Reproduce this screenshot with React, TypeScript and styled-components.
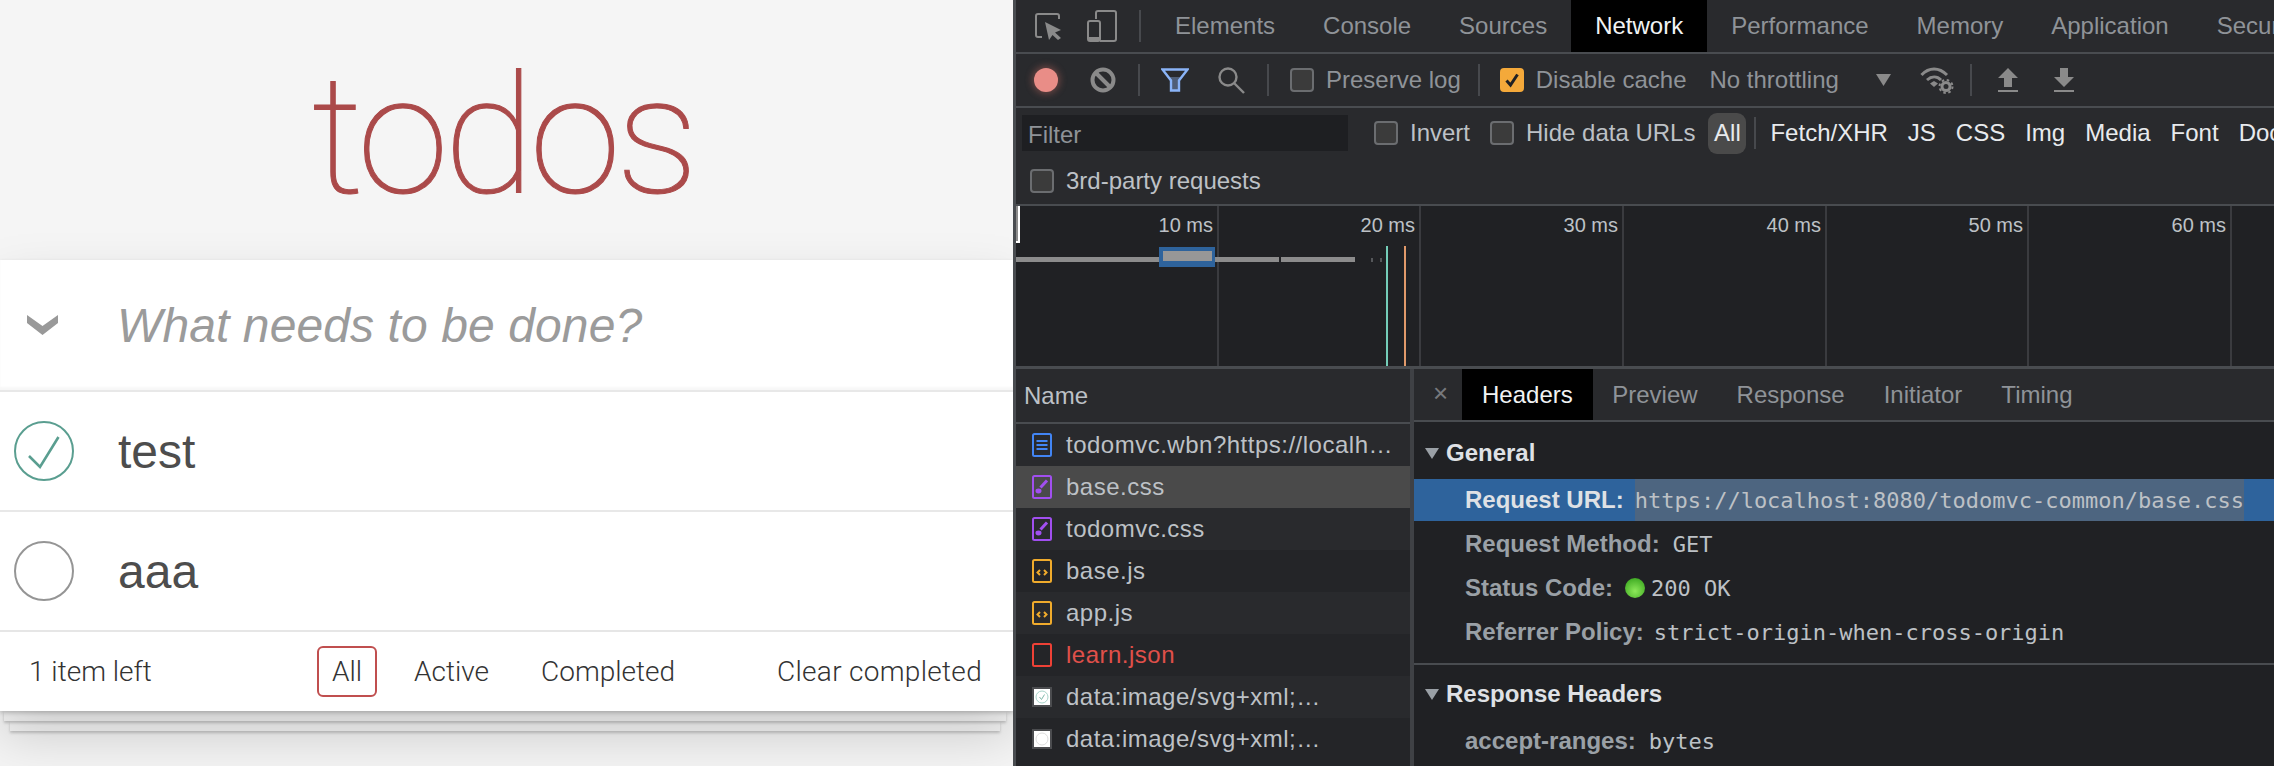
import styled, { createGlobalStyle } from "styled-components";

const GlobalStyle = createGlobalStyle`
  html, body {
    margin: 0;
    height: 100%;
    overflow: hidden;
    background: #f5f5f5;
  }
  * {
    box-sizing: border-box;
  }
`;

const LINE = "#494c50";

const Page = styled.div`
  display: flex;
  width: 2274px;
  height: 766px;
  overflow: hidden;
`;

/* ---------- todomvc side ---------- */

const TodoPane = styled.div`
  width: 1013px;
  flex: none;
  height: 100%;
  background: #f5f5f5;
  overflow: hidden;
  font-family: "Liberation Sans", Arial, sans-serif;
  color: #4d4d4d;
`;

const Title = styled.h1`
  margin: 0;
  height: 260px;
  padding: 53px 8px 0 0;
  text-align: center;
  font-family: Roboto, "Liberation Sans", sans-serif;
  font-size: 166px;
  line-height: 166px;
  font-weight: 100;
  letter-spacing: -5px;
  color: #ab4a4a;
  -webkit-text-stroke: 1px #ab4a4a;
`;

const TodoCard = styled.section`
  position: relative;
  z-index: 3;
  background: #fff;
  box-shadow: 0 2px 4px 0 rgba(0, 0, 0, 0.2), 0 25px 50px 0 rgba(0, 0, 0, 0.17);
`;

const NewTodo = styled.div`
  display: flex;
  align-items: center;
  height: 130px;
  padding-left: 27px;
  box-shadow: inset 0 -3px 2px rgba(0, 0, 0, 0.03);
`;

const Placeholder = styled.span`
  margin-left: 58px;
  font-size: 48px;
  font-style: italic;
  letter-spacing: 0.1px;
  color: #9b9b9b;
`;

const TodoRow = styled.div`
  display: flex;
  align-items: center;
  height: 120px;
  padding-left: 14px;
  border-top: 2px solid #e8e8e8;
`;

const TodoText = styled.span`
  margin-left: 44px;
  font-size: 48px;
  color: #4d4d4d;
`;

const Footer = styled.div`
  display: flex;
  align-items: center;
  height: 81px;
  padding: 0 31px 1px 29px;
  border-top: 2px solid #e6e6e6;
  font-family: Roboto, "Liberation Sans", sans-serif;
  font-size: 28px;
  font-weight: 300;
  color: #333;
`;

const Count = styled.span`
  width: 288px;
`;

const Filters = styled.div`
  display: flex;
  gap: 22px;
`;

const FilterLink = styled.span<{ $active?: boolean }>`
  display: flex;
  align-items: center;
  height: 51px;
  padding: 0 13px;
  border: 2px solid ${(p) => (p.$active ? "#c04f4f" : "transparent")};
  border-radius: 6px;
`;

const ClearButton = styled.span`
  margin-left: auto;
  letter-spacing: 0.3px;
`;

const PaperEdge = styled.div<{ $left: number; $right: number; $level: number }>`
  position: relative;
  z-index: ${(p) => p.$level};
  height: 10px;
  margin: 0 ${(p) => p.$right}px 0 ${(p) => p.$left}px;
  background: #f6f6f6;
  box-shadow: 0 2px 3px rgba(0, 0, 0, 0.2);
`;

/* ---------- devtools side ---------- */

const DevPane = styled.div`
  flex: 1;
  min-width: 0;
  height: 100%;
  display: flex;
  flex-direction: column;
  border-left: 3px solid ${LINE};
  background: #292a2d;
  font-family: "Liberation Sans", Arial, sans-serif;
  font-size: 24px;
  color: #9aa0a6;
  overflow: hidden;
`;

const TopBar = styled.div`
  display: flex;
  flex: none;
  align-items: center;
  height: 54px;
  border-bottom: 2px solid ${LINE};
  white-space: nowrap;
`;

const PanelTab = styled.div<{ $active?: boolean }>`
  display: flex;
  align-items: center;
  height: 52px;
  padding: 0 24px;
  color: ${(p) => (p.$active ? "#f1f3f4" : "#8f9398")};
  background: ${(p) => (p.$active ? "#000" : "transparent")};
`;

const ToolRow = styled.div`
  display: flex;
  flex: none;
  align-items: center;
  height: 54px;
  border-bottom: 2px solid ${LINE};
  white-space: nowrap;
`;

const FilterArea = styled.div`
  flex: none;
  height: 98px;
  border-bottom: 2px solid ${LINE};
  white-space: nowrap;
`;

const FilterRow = styled.div`
  display: flex;
  align-items: center;
  height: 50px;
`;

const ThirdPartyRow = styled.div`
  display: flex;
  align-items: center;
  height: 46px;
  color: #bdc1c6;
`;

const Spaced = styled.div<{ $left: number }>`
  display: flex;
  flex: none;
  align-items: center;
  margin-left: ${(p) => p.$left}px;
`;

const Separator = styled.div<{ $left: number }>`
  flex: none;
  width: 2px;
  height: 32px;
  margin-left: ${(p) => p.$left}px;
  background: #47494d;
`;

const RecordDot = styled.div`
  flex: none;
  width: 24px;
  height: 24px;
  margin-left: 18px;
  border-radius: 50%;
  background: #e98d87;
  box-shadow: 0 0 7px 2px rgba(233, 120, 110, 0.35);
`;

const CheckBox = styled.span<{ $checked?: boolean }>`
  display: flex;
  align-items: center;
  justify-content: center;
  flex: none;
  width: 24px;
  height: 24px;
  margin-right: 12px;
  border-radius: 4px;
  border: 2px solid ${(p) => (p.$checked ? "#f4a93a" : "#6b6d70")};
  background: ${(p) => (p.$checked ? "#f4a93a" : "#3b3b3b")};
`;

const CheckLabel = styled.span<{ $light?: boolean }>`
  color: ${(p) => (p.$light ? "#bdc1c6" : "#8f9398")};
`;

const FilterInput = styled.div`
  display: flex;
  align-items: center;
  flex: none;
  width: 326px;
  height: 36px;
  margin-left: 6px;
  padding: 4px 0 0 6px;
  background: #1e1f22;
  color: #8f9398;
`;

const TypePill = styled.span<{ $active?: boolean }>`
  display: flex;
  align-items: center;
  justify-content: center;
  flex: none;
  height: 41px;
  width: ${(p) => (p.$active ? "38px" : "auto")};
  margin-left: ${(p) => (p.$active ? "13px" : "20px")};
  border-radius: 9px;
  color: #e8eaed;
  background: ${(p) => (p.$active ? "#4a4a4a" : "transparent")};
`;

const Timeline = styled.div`
  position: relative;
  display: flex;
  flex: none;
  height: 163px;
  background: #202124;
  border-bottom: 3px solid ${LINE};
`;

const TickCell = styled.div<{ $width: number }>`
  flex: none;
  width: ${(p) => p.$width}px;
  padding: 7px 4px 0 0;
  border-right: 2px solid #3a3b3f;
  text-align: right;
  font-size: 20px;
  line-height: 24px;
  color: #bdc1c6;
`;

const TimelineMarks = styled.svg`
  position: absolute;
  left: 0;
  top: 0;
  width: 320px;
  height: 160px;
  overflow: visible;
`;

const BottomSplit = styled.div`
  flex: 1;
  display: flex;
  min-height: 0;
`;

const NameColumn = styled.div`
  flex: none;
  width: 398px;
  border-right: 4px solid #3f4145;
  background: #242528;
`;

const NameHeader = styled.div`
  display: flex;
  align-items: center;
  height: 55px;
  padding: 1px 0 0 8px;
  border-bottom: 2px solid ${LINE};
  background: #292a2d;
  color: #bdc1c6;
`;

const NameRow = styled.div<{ $shade: "plain" | "alt" | "selected" }>`
  display: flex;
  align-items: center;
  height: 42px;
  padding-left: 16px;
  white-space: nowrap;
  background: ${(p) =>
    p.$shade === "selected" ? "#4a4a4a" : p.$shade === "alt" ? "#292a2d" : "#242528"};
`;

const NameText = styled.span<{ $failed?: boolean }>`
  margin-left: 14px;
  letter-spacing: 0.5px;
  color: ${(p) => (p.$failed ? "#e0504a" : "#bdc1c6")};
`;

const DetailColumn = styled.div`
  flex: 1;
  min-width: 0;
  background: #202124;
  white-space: nowrap;
`;

const DetailTabs = styled.div`
  display: flex;
  align-items: center;
  height: 53px;
  padding-left: 19px;
  border-bottom: 2px solid ${LINE};
  background: #292a2d;
`;

const CloseMark = styled.span`
  width: 29px;
  margin-top: -2px;
  color: #77797d;
  font-size: 26px;
`;

const DetailTab = styled.div<{ $active?: boolean }>`
  display: flex;
  align-items: center;
  height: 51px;
  padding: 0 ${(p) => (p.$active ? "20px" : "19.5px")};
  color: ${(p) => (p.$active ? "#f1f3f4" : "#8f9398")};
  background: ${(p) => (p.$active ? "#000" : "transparent")};
`;

const SectionTitle = styled.div<{ $height: number; $top: number }>`
  display: flex;
  align-items: center;
  height: ${(p) => p.$height}px;
  padding: ${(p) => p.$top}px 0 0 11px;
  font-weight: 700;
  color: #dfe1e5;
`;

const Arrow = styled.span`
  flex: none;
  width: 0;
  height: 0;
  margin-right: 7px;
  border-left: 7px solid transparent;
  border-right: 7px solid transparent;
  border-top: 11px solid #9aa0a6;
`;

const HeaderRow = styled.div<{ $selected?: boolean }>`
  display: flex;
  align-items: stretch;
  height: ${(p) => (p.$selected ? "42px" : "44px")};
  margin: ${(p) => (p.$selected ? "1px 0" : "0")};
  padding-left: 51px;
  background: ${(p) => (p.$selected ? "#2e639c" : "transparent")};
`;

const HeaderKey = styled.span<{ $selected?: boolean }>`
  display: flex;
  align-items: center;
  font-weight: 700;
  color: ${(p) => (p.$selected ? "#dfe1e5" : "#9aa0a6")};
`;

const HeaderValue = styled.span<{ $selected?: boolean; $gap: number }>`
  display: flex;
  align-items: center;
  margin-left: ${(p) => p.$gap}px;
  font-family: "DejaVu Sans Mono", "Liberation Mono", monospace;
  font-size: 22px;
  color: #bdc1c6;
  background: ${(p) => (p.$selected ? "#4d6580" : "transparent")};
`;

const StatusDot = styled.span`
  flex: none;
  align-self: center;
  width: 20px;
  height: 20px;
  margin-left: 12px;
  border-radius: 50%;
  background: radial-gradient(circle at 50% 65%, #8de85a 0%, #49b32a 70%, #2f8f1e 100%);
`;

const SectionDivider = styled.div`
  height: 2px;
  margin-top: 9px;
  background: ${LINE};
`;

/* ---------- drawings ---------- */

const GREY = "#8a8a8a";

const ToggleAll = () => (
  <svg width="32" height="20" viewBox="0 0 32 20">
    <polygon points="0,0 15.5,11 31,0 31,8 15.5,20 0,8" fill="#999" />
  </svg>
);

const RoundCheck = ({ done }: { done?: boolean }) => (
  <svg width="60" height="60" viewBox="0 0 60 60">
    <circle cx="30" cy="30" r="29" fill="none" stroke={done ? "#5a9e90" : "#959595"} strokeWidth="2" />
    {done && <path d="M15 35 L26 46 L44.5 16" fill="none" stroke="#5a9e90" strokeWidth="2.6" />}
  </svg>
);

const InspectIcon = () => (
  <svg width="27" height="27" viewBox="0 0 27 27">
    <path d="M7 24H3a2 2 0 0 1-2-2V3a2 2 0 0 1 2-2h19a2 2 0 0 1 2 2v3" fill="none" stroke={GREY} strokeWidth="2" />
    <polygon points="10,9 26,17 20,19.5 26,25 23,27 17.5,22 14,27" fill={GREY} />
  </svg>
);

const DeviceIcon = () => (
  <svg width="30" height="32" viewBox="0 0 30 32">
    <path d="M9 9V3a2 2 0 0 1 2-2h16a2 2 0 0 1 2 2v26a2 2 0 0 1-2 2H13" fill="none" stroke={GREY} strokeWidth="2" />
    <rect x="1" y="11" width="12" height="20" rx="2" fill="none" stroke={GREY} strokeWidth="2" />
    <rect x="1" y="27" width="12" height="4" fill={GREY} />
  </svg>
);

const ClearIcon = () => (
  <svg width="26" height="26" viewBox="0 0 26 26">
    <circle cx="13" cy="13" r="10.5" fill="none" stroke={GREY} strokeWidth="4" />
    <line x1="6" y1="6" x2="20" y2="20" stroke={GREY} strokeWidth="4" />
  </svg>
);

const FunnelIcon = () => (
  <svg width="28" height="24" viewBox="0 0 28 24">
    <polygon points="8,9 20,9 18,13 18,22 10,22 10,13" fill="#4f5e77" />
    <polygon points="1.5,1.5 26.5,1.5 18,12.5 18,22.5 10,22.5 10,12.5" fill="none" stroke="#8ab4f8" strokeWidth="2.4" />
  </svg>
);

const SearchIcon = () => (
  <svg width="28" height="28" viewBox="0 0 28 28">
    <circle cx="11" cy="11" r="8.5" fill="none" stroke={GREY} strokeWidth="2.4" />
    <line x1="17" y1="17" x2="27" y2="27" stroke={GREY} strokeWidth="2.4" />
  </svg>
);

const DropTriangle = () => (
  <svg width="15" height="12" viewBox="0 0 15 12">
    <polygon points="0,0 15,0 7.5,12" fill={GREY} />
  </svg>
);

const WifiGearIcon = () => (
  <svg width="34" height="28" viewBox="0 0 34 28">
    <path d="M1.5 9 C9 1 19 1 27 9" fill="none" stroke={GREY} strokeWidth="3" />
    <path d="M7 14 C11.5 10 17 10 21 14" fill="none" stroke={GREY} strokeWidth="3" />
    <polygon points="10,17.5 14,15 18,17.5 14,21" fill={GREY} />
    <circle cx="26" cy="20.5" r="4" fill="none" stroke={GREY} strokeWidth="3" />
    <circle cx="26" cy="20.5" r="6.5" fill="none" stroke={GREY} strokeWidth="2" strokeDasharray="2.5 2.6" />
  </svg>
);

const ImportIcon = () => (
  <svg width="20" height="24" viewBox="0 0 20 24">
    <polygon points="10,0 20,10 14,10 14,19 6,19 6,10 0,10" fill={GREY} />
    <rect x="0" y="22" width="20" height="2" fill={GREY} />
  </svg>
);

const ExportIcon = () => (
  <svg width="20" height="24" viewBox="0 0 20 24">
    <polygon points="6,0 14,0 14,9 20,9 10,19 0,9 6,9" fill={GREY} />
    <rect x="0" y="22" width="20" height="2" fill={GREY} />
  </svg>
);

const CheckMark = () => (
  <svg width="16" height="16" viewBox="0 0 16 16">
    <path d="M2.5 8.5 L6.5 13 L13.5 2.5" fill="none" stroke="#202124" strokeWidth="3" />
  </svg>
);

type FileKind = "doc" | "css" | "js" | "failed" | "imgDone" | "imgOpen";

const FileIcon = ({ kind }: { kind: FileKind }) => {
  if (kind === "imgDone" || kind === "imgOpen") {
    return (
      <svg width="20" height="20" viewBox="0 0 20 20">
        <rect width="20" height="20" fill="#4b4c4f" />
        <rect x="2" y="2" width="16" height="16" fill="#fff" />
        <circle cx="10" cy="10" r="6" fill="none" stroke={kind === "imgDone" ? "#a6d3c9" : "#ddd"} strokeWidth="1" />
        {kind === "imgDone" && <path d="M7.5 10 L9.5 12.5 L12.5 7.5" fill="none" stroke="#7fb9ab" strokeWidth="1" />}
      </svg>
    );
  }
  const color = { doc: "#4285f4", css: "#a14ff0", js: "#f0ab2c", failed: "#ee4136" }[kind];
  return (
    <svg width="20" height="24" viewBox="0 0 20 24">
      <rect x="1" y="1" width="18" height="22" rx="1.5" fill="none" stroke={color} strokeWidth="2" />
      {kind === "doc" && <path d="M4.5 8H15.5M4.5 12H15.5M4.5 16H15.5" stroke={color} strokeWidth="2" />}
      {kind === "css" && (
        <>
          <path d="M8.5 12.5 L15 5.5" stroke={color} strokeWidth="3" />
          <ellipse cx="6.5" cy="16" rx="3" ry="2.4" fill={color} />
        </>
      )}
      {kind === "js" && <path d="M8 11 L5.5 13.5 L8 16 M12 11 L14.5 13.5 L12 16" fill="none" stroke={color} strokeWidth="2" />}
    </svg>
  );
};

const panelTabs = ["Elements", "Console", "Sources", "Network", "Performance", "Memory", "Application", "Security"];

const typeFilters = ["Fetch/XHR", "JS", "CSS", "Img", "Media", "Font", "Doc"];

const ticks = [
  { width: 203, label: "10 ms" },
  { width: 202, label: "20 ms" },
  { width: 203, label: "30 ms" },
  { width: 203, label: "40 ms" },
  { width: 202, label: "50 ms" },
  { width: 203, label: "60 ms" },
];

const requests: { name: string; kind: FileKind }[] = [
  { name: "todomvc.wbn?https://localh…", kind: "doc" },
  { name: "base.css", kind: "css" },
  { name: "todomvc.css", kind: "css" },
  { name: "base.js", kind: "js" },
  { name: "app.js", kind: "js" },
  { name: "learn.json", kind: "failed" },
  { name: "data:image/svg+xml;…", kind: "imgDone" },
  { name: "data:image/svg+xml;…", kind: "imgOpen" },
];

const detailTabs = ["Headers", "Preview", "Response", "Initiator", "Timing"];

function TodoSide() {
  return (
    <TodoPane>
      <Title>todos</Title>
      <TodoCard>
        <NewTodo>
          <ToggleAll />
          <Placeholder>What needs to be done?</Placeholder>
        </NewTodo>
        <TodoRow>
          <RoundCheck done />
          <TodoText>test</TodoText>
        </TodoRow>
        <TodoRow>
          <RoundCheck />
          <TodoText>aaa</TodoText>
        </TodoRow>
        <Footer>
          <Count>1 item left</Count>
          <Filters>
            <FilterLink $active>All</FilterLink>
            <FilterLink>Active</FilterLink>
            <FilterLink>Completed</FilterLink>
          </Filters>
          <ClearButton>Clear completed</ClearButton>
        </Footer>
      </TodoCard>
      <PaperEdge $left={4} $right={7} $level={2} />
      <PaperEdge $left={10} $right={13} $level={1} />
    </TodoPane>
  );
}

function NetworkOverview() {
  return (
    <Timeline>
      {ticks.map((tick) => (
        <TickCell key={tick.label} $width={tick.width}>
          {tick.label}
        </TickCell>
      ))}
      <TimelineMarks viewBox="0 0 320 160">
        <rect x="-2" y="0" width="6" height="37" fill="#fff" />
        <rect x="-2" y="0" width="4" height="35" fill="#8c8c8c" />
        <rect x="0" y="51" width="143" height="5" fill="#8c8c8c" />
        <rect x="143" y="41" width="56" height="20" fill="#2e639c" />
        <rect x="147" y="45" width="49" height="10" fill="#979797" />
        <rect x="199" y="51" width="64" height="5" fill="#8c8c8c" />
        <rect x="265" y="51" width="74" height="5" fill="#8c8c8c" />
        <rect x="355" y="52" width="2" height="4" fill="#55575a" />
        <rect x="364" y="52" width="2" height="4" fill="#55575a" />
        <rect x="370" y="40" width="2" height="120" fill="#74cdb8" />
        <rect x="388" y="40" width="2" height="120" fill="#e0996a" />
      </TimelineMarks>
    </Timeline>
  );
}

function DevToolsSide() {
  return (
    <DevPane>
      <TopBar>
        <Spaced $left={19}>
          <InspectIcon />
        </Spaced>
        <Spaced $left={25}>
          <DeviceIcon />
        </Spaced>
        <Separator $left={22} />
        <Spaced $left={10} />
        {panelTabs.map((tab) => (
          <PanelTab key={tab} $active={tab === "Network"}>
            {tab}
          </PanelTab>
        ))}
      </TopBar>
      <ToolRow>
        <RecordDot />
        <Spaced $left={32}>
          <ClearIcon />
        </Spaced>
        <Separator $left={22} />
        <Spaced $left={21}>
          <FunnelIcon />
        </Spaced>
        <Spaced $left={28}>
          <SearchIcon />
        </Spaced>
        <Separator $left={22} />
        <Spaced $left={21}>
          <CheckBox />
          <CheckLabel>Preserve log</CheckLabel>
        </Spaced>
        <Separator $left={17} />
        <Spaced $left={20}>
          <CheckBox $checked>
            <CheckMark />
          </CheckBox>
          <CheckLabel>Disable cache</CheckLabel>
        </Spaced>
        <Spaced $left={23}>
          <CheckLabel>No throttling</CheckLabel>
        </Spaced>
        <Spaced $left={37}>
          <DropTriangle />
        </Spaced>
        <Spaced $left={29}>
          <WifiGearIcon />
        </Spaced>
        <Separator $left={16} />
        <Spaced $left={26}>
          <ImportIcon />
        </Spaced>
        <Spaced $left={36}>
          <ExportIcon />
        </Spaced>
      </ToolRow>
      <FilterArea>
        <FilterRow>
          <FilterInput>Filter</FilterInput>
          <Spaced $left={26}>
            <CheckBox />
            <CheckLabel $light>Invert</CheckLabel>
          </Spaced>
          <Spaced $left={20}>
            <CheckBox />
            <CheckLabel $light>Hide data URLs</CheckLabel>
          </Spaced>
          <TypePill $active>All</TypePill>
          <Separator $left={8} />
          <Spaced $left={-6} />
          {typeFilters.map((type) => (
            <TypePill key={type}>{type}</TypePill>
          ))}
        </FilterRow>
        <ThirdPartyRow>
          <Spaced $left={14}>
            <CheckBox />
            3rd-party requests
          </Spaced>
        </ThirdPartyRow>
      </FilterArea>
      <NetworkOverview />
      <BottomSplit>
        <NameColumn>
          <NameHeader>Name</NameHeader>
          {requests.map((request, i) => (
            <NameRow
              key={request.name + i}
              $shade={i === 1 ? "selected" : i % 2 === 0 ? "alt" : "plain"}
            >
              <FileIcon kind={request.kind} />
              <NameText $failed={request.kind === "failed"}>{request.name}</NameText>
            </NameRow>
          ))}
        </NameColumn>
        <DetailColumn>
          <DetailTabs>
            <CloseMark>×</CloseMark>
            {detailTabs.map((tab) => (
              <DetailTab key={tab} $active={tab === "Headers"}>
                {tab}
              </DetailTab>
            ))}
          </DetailTabs>
          <SectionTitle $height={56} $top={6}>
            <Arrow />
            General
          </SectionTitle>
          <HeaderRow $selected>
            <HeaderKey $selected>Request URL:</HeaderKey>
            <HeaderValue $selected $gap={11}>
              https://localhost:8080/todomvc-common/base.css
            </HeaderValue>
          </HeaderRow>
          <HeaderRow>
            <HeaderKey>Request Method:</HeaderKey>
            <HeaderValue $gap={13}>GET</HeaderValue>
          </HeaderRow>
          <HeaderRow>
            <HeaderKey>Status Code:</HeaderKey>
            <StatusDot />
            <HeaderValue $gap={6}>200 OK</HeaderValue>
          </HeaderRow>
          <HeaderRow>
            <HeaderKey>Referrer Policy:</HeaderKey>
            <HeaderValue $gap={10}>strict-origin-when-cross-origin</HeaderValue>
          </HeaderRow>
          <SectionDivider />
          <SectionTitle $height={54} $top={4}>
            <Arrow />
            Response Headers
          </SectionTitle>
          <HeaderRow>
            <HeaderKey>accept-ranges:</HeaderKey>
            <HeaderValue $gap={13}>bytes</HeaderValue>
          </HeaderRow>
        </DetailColumn>
      </BottomSplit>
    </DevPane>
  );
}

export default function App() {
  return (
    <>
      <GlobalStyle />
      <Page>
        <TodoSide />
        <DevToolsSide />
      </Page>
    </>
  );
}
